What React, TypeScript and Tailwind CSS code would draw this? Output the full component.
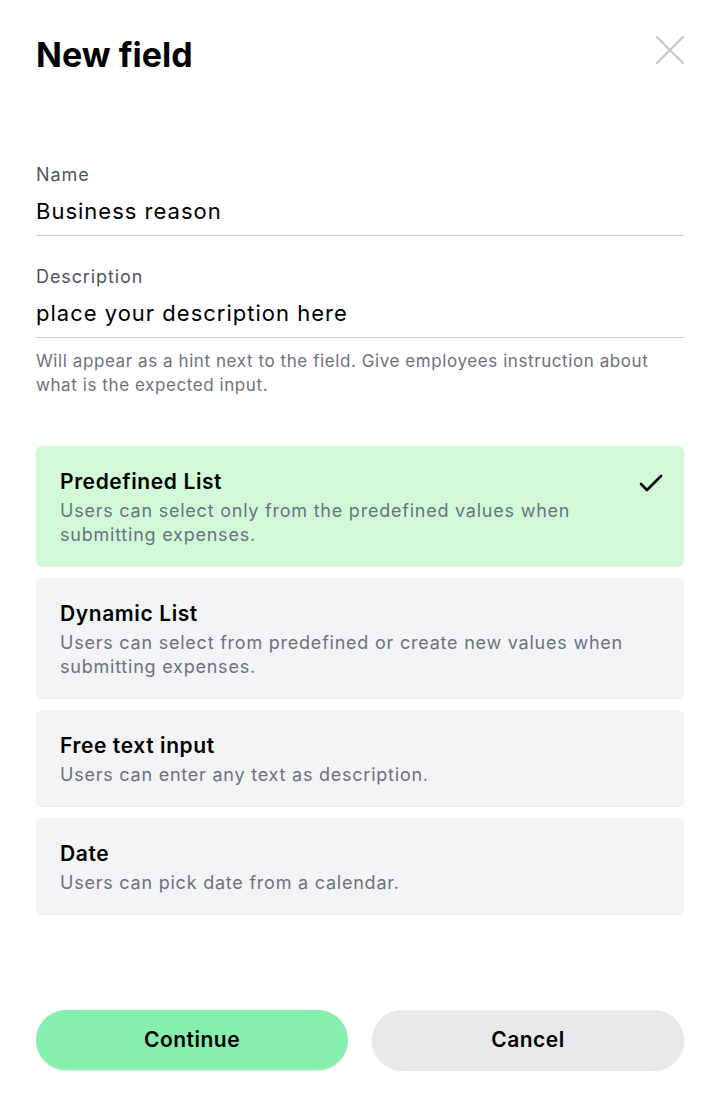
import { useState } from "react"

const options = [
  { title: "Predefined List", desc: "Users can select only from the predefined values when submitting expenses." },
  { title: "Dynamic List", desc: "Users can select from predefined or create new values when submitting expenses." },
  { title: "Free text input", desc: "Users can enter any text as description." },
  { title: "Date", desc: "Users can pick date from a calendar." },
]

export default function App() {
  const [selected, setSelected] = useState<number>(0)

  return (
    <div className="min-h-screen bg-white px-9 font-['Inter',sans-serif] text-black">
      <div className="flex items-start justify-between pt-[35px]">
        <h1 className="text-[34px] leading-[40px] font-bold">New field</h1>
        <button className="mt-[1px] text-[#c4c7cc]" aria-label="Close">
          <svg width="28" height="28" viewBox="0 0 28 28" fill="none" stroke="currentColor" strokeWidth="2.2" strokeLinecap="round">
            <path d="M1 1L27 27M27 1L1 27" />
          </svg>
        </button>
      </div>

      <div className="mt-[88px]">
        <label className="block text-[18px] leading-[24px] tracking-[0.9px] text-[#4b5563]">Name</label>
        <div className="mt-[10px] border-b border-[#c9ccd1] pb-[10px] text-[22px] leading-[28px] tracking-[1px]">Business reason</div>
      </div>

      <div className="mt-[29px]">
        <label className="block text-[18px] leading-[24px] tracking-[0.9px] text-[#4b5563]">Description</label>
        <div className="mt-[10px] border-b border-[#c9ccd1] pb-[10px] text-[22px] leading-[28px] tracking-[1px]">place your description here</div>
        <p className="mt-[11px] text-[17px] leading-[24px] tracking-[0.58px] text-[#6b7280]">
          Will appear as a hint next to the field. Give employees instruction about what is the expected input.
        </p>
      </div>

      <div className="mt-[49px] flex flex-col gap-3">
        {options.map((o, i) => (
          <div
            key={o.title}
            onClick={() => setSelected(i)}
            className={
              "flex items-start justify-between rounded-[6px] px-6 pt-[22px] pb-[19px] shadow-[0_1px_1px_rgba(0,0,0,0.08)] cursor-pointer " +
              (selected === i ? "bg-[#d1fad9]" : "bg-[#f3f4f6]")
            }
          >
            <div className={selected === i ? "pr-10" : "pr-0"}>
              <div className="text-[21px] leading-[28px] font-semibold tracking-[0.6px]">{o.title}</div>
              <div className="mt-[3px] text-[18px] leading-[24px] tracking-[0.77px] text-[#6b7280]">{o.desc}</div>
            </div>
            {selected === i && (
              <svg className="mt-[5px] mr-[-3px] shrink-0" width="24" height="20" viewBox="0 0 24 20" fill="none" stroke="black" strokeWidth="2.6" strokeLinecap="round" strokeLinejoin="round">
                <path d="M2 11L8 17L22 3" />
              </svg>
            )}
          </div>
        ))}
      </div>

      <div className="mt-[96px] flex gap-6">
        <button className="h-[60px] flex-1 rounded-full bg-[#86efad] text-[21px] font-semibold tracking-[0.5px] shadow-[0_1px_1px_rgba(0,0,0,0.1)]">Continue</button>
        <button className="h-[60px] flex-1 rounded-full bg-[#e8e9eb] text-[21px] font-semibold tracking-[0.5px] shadow-[0_1px_1px_rgba(0,0,0,0.1)]">Cancel</button>
      </div>
    </div>
  )
}
